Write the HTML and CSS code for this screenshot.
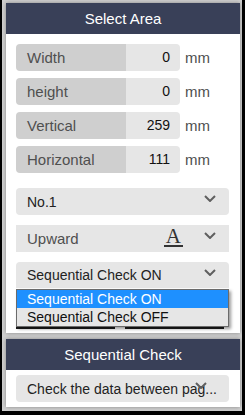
FILE: index.html
```html
<!DOCTYPE html>
<html>
<head>
<meta charset="utf-8">
<link rel="stylesheet" href="styles.css">
</head>
<body>
<div class="frame">
  <section class="panel">
    <header class="panel-head">Select Area</header>
    <div class="panel-body">
      <div class="fields">
        <div class="field"><div class="field-box"><span class="field-label">Width</span><span class="field-value">0</span></div><span class="unit">mm</span></div>
        <div class="field"><div class="field-box"><span class="field-label">height</span><span class="field-value">0</span></div><span class="unit">mm</span></div>
        <div class="field"><div class="field-box"><span class="field-label">Vertical</span><span class="field-value">259</span></div><span class="unit">mm</span></div>
        <div class="field"><div class="field-box"><span class="field-label">Horizontal</span><span class="field-value">111</span></div><span class="unit">mm</span></div>
      </div>
      <div class="selects">
        <div class="select"><span class="select-text">No.1</span><svg class="chev" width="12" height="7" viewBox="0 0 12 7"><polyline points="1,1 6,6 11,1" fill="none" stroke="#5f5f5f" stroke-width="2"/></svg></div>
        <div class="select select-square"><span class="select-text select-muted">Upward</span><span class="text-icon">A</span><svg class="chev" width="12" height="7" viewBox="0 0 12 7"><polyline points="1,1 6,6 11,1" fill="none" stroke="#5f5f5f" stroke-width="2"/></svg></div>
        <div class="select-wrap">
          <div class="select select-open"><span class="select-text">Sequential Check ON</span><svg class="chev" width="12" height="7" viewBox="0 0 12 7"><polyline points="1,1 6,6 11,1" fill="none" stroke="#5f5f5f" stroke-width="2"/></svg></div>
          <ul class="dropdown">
            <li class="option option-active">Sequential Check ON</li>
            <li class="option">Sequential Check OFF</li>
          </ul>
        </div>
      </div>
      <div class="buttons"><span class="btn"></span><span class="btn"></span></div>
    </div>
  </section>
  <section class="panel">
    <header class="panel-head">Sequential Check</header>
    <div class="panel-body panel-body-small">
      <div class="select"><span class="select-text select-nowrap">Check the data between pag...</span><svg class="chev chev-over" width="12" height="7" viewBox="0 0 12 7"><polyline points="1,1 6,6 11,1" fill="none" stroke="#5f5f5f" stroke-width="2"/></svg></div>
    </div>
  </section>
</div>
</body>
</html>
```
FILE: styles.css
```css
* { box-sizing: border-box; }
html, body { margin: 0; padding: 0; }
body {
  width: 245px;
  height: 415px;
  font-family: "Liberation Sans", Arial, sans-serif;
  font-size: 14px;
  color: #222;
  overflow: hidden;
}
.frame {
  width: 245px;
  height: 415px;
  background: #cfcfcf;
  border-left: 2px solid #000;
  border-right: 3px solid #000;
  border-bottom: 4px solid #000;
  padding: 3px 2px 4px 4px;
  display: flex;
  flex-direction: column;
  gap: 6px;
}
.panel {
  background: #fff;
  box-shadow: 0 0 4px rgba(0, 0, 0, 0.35);
}
.panel-head {
  height: 31px;
  background: #394058;
  color: #fff;
  font-size: 15px;
  display: flex;
  align-items: center;
  justify-content: center;
}
.panel-body {
  padding: 10px 11px 4px 10px;
  display: flex;
  flex-direction: column;
}
.panel-body-small {
  padding: 5px 11px 5px 10px;
}
.fields {
  display: flex;
  flex-direction: column;
  gap: 7px;
}
.field {
  display: flex;
  align-items: center;
  height: 27px;
}
.field-box {
  width: 164px;
  height: 27px;
  display: flex;
  border-radius: 4px;
  overflow: hidden;
}
.field-label {
  width: 110px;
  background: #cfcfcf;
  color: #4f4f4f;
  font-size: 15px;
  line-height: 27px;
  padding-left: 11px;
}
.field-value {
  flex: 1;
  background: #e6e6e6;
  color: #111;
  line-height: 27px;
  text-align: right;
  padding-right: 10px;
}
.unit {
  margin-left: 5px;
  font-size: 15px;
  color: #4f4f4f;
}
.selects {
  margin-top: 15px;
  display: flex;
  flex-direction: column;
  gap: 10px;
}
.select {
  height: 27px;
  background: #e6e6e6;
  border-radius: 4px;
  padding-left: 11px;
  display: flex;
  align-items: center;
}
.select-square { border-radius: 0; }
.select-open {
  height: 26px;
  border-radius: 4px 4px 0 0;
}
.select-text {
  flex: 1;
  color: #222;
}
.select-muted {
  color: #4f4f4f;
  font-size: 15px;
}
.select-nowrap {
  white-space: nowrap;
  flex: none;
  width: 190px;
}
.text-icon {
  align-self: flex-start;
  margin-top: 3px;
  margin-right: 21px;
  font-family: "Liberation Serif", "Times New Roman", serif;
  font-size: 21px;
  line-height: 17px;
  color: #333;
  padding: 0 2px;
  border-bottom: 2px solid #333;
}
.chev {
  flex: none;
  align-self: flex-start;
  margin-top: 7px;
  margin-right: 13px;
}
.chev-over {
  margin-left: -22px;
}
.select-wrap {
  position: relative;
}
.dropdown {
  position: absolute;
  left: 0;
  right: 0;
  top: 27px;
  margin: 0;
  padding: 0;
  list-style: none;
  border: 1px solid #6b6b6b;
  background: #e6e6e6;
  box-shadow: 2px 2px 3px rgba(0, 0, 0, 0.4);
  z-index: 2;
}
.option {
  height: 18px;
  line-height: 18px;
  padding-left: 10px;
  color: #111;
}
.option-active {
  background: #1e90ff;
  color: #fff;
}
.buttons {
  margin-top: 8px;
  display: flex;
  gap: 10px;
}
.btn {
  width: 99px;
  height: 33px;
  background: #e6e6e6;
  border-bottom: 3px solid #1c1c1c;
}
```
